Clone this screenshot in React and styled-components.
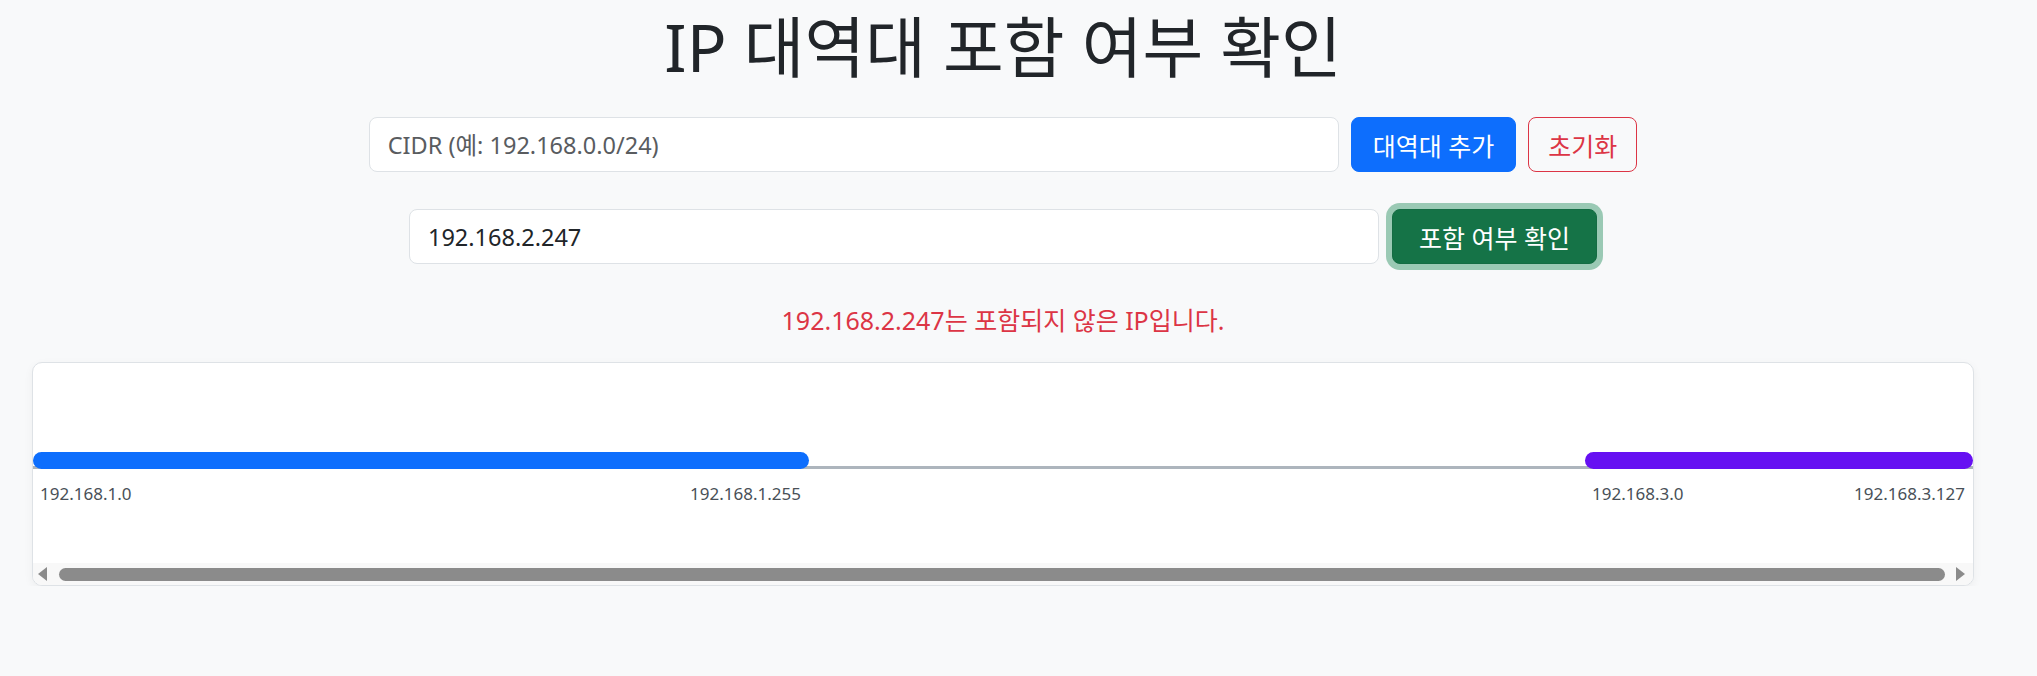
import React from "react";
import styled, { createGlobalStyle } from "styled-components";

const GlobalStyle = createGlobalStyle`
  body {
    margin: 0;
    background: #f8f9fa;
    color: #212529;
    font-family: "Noto Sans", "Noto Sans CJK KR", sans-serif;
  }
`;

const Page = styled.div`
  width: 1942px;
  margin-left: 32px;
`;

const Title = styled.h1`
  margin: 7px 0 31px;
  font-size: 66px;
  font-weight: 400;
  line-height: 1.2;
  text-align: center;
  color: #212529;
`;

const Row = styled.div`
  display: flex;
  justify-content: center;
  gap: ${(props) => props.gap || 12}px;
  margin-bottom: ${(props) => props.bottom || 0}px;
`;

const Input = styled.input`
  box-sizing: border-box;
  width: 970px;
  height: 55px;
  padding: 0 18px;
  border: 1px solid #dee2e6;
  border-radius: 8px;
  background: #fff;
  color: #212529;
  font-family: inherit;
  font-size: 23.5px;
  outline: none;
  &::placeholder {
    color: #595c5f;
  }
`;

const Button = styled.button`
  box-sizing: border-box;
  height: 55px;
  padding: 0 ${(props) => props.pad || 21}px;
  border-radius: 8px;
  font-family: inherit;
  font-size: 25px;
  cursor: pointer;
  border: 1px solid
    ${(props) =>
      props.variant === "danger"
        ? "#dc3545"
        : props.variant === "success"
        ? "#146c43"
        : "#0d6efd"};
  background: ${(props) =>
    props.variant === "danger"
      ? "transparent"
      : props.variant === "success"
      ? "#157347"
      : "#0d6efd"};
  color: ${(props) => (props.variant === "danger" ? "#dc3545" : "#fff")};
  box-shadow: ${(props) =>
    props.focused ? "0 0 0 6px rgba(60, 153, 110, 0.5)" : "none"};
`;

const Message = styled.p`
  margin: 38px 0 24px;
  font-size: 25px;
  line-height: 36px;
  text-align: center;
  color: #dc3545;
`;

const Card = styled.div`
  height: 224px;
  box-sizing: border-box;
  border: 1px solid #dee2e6;
  border-radius: 10px;
  background: #fff;
  overflow: hidden;
  box-shadow: 0 3px 10px rgba(0, 0, 0, 0.05);
  display: flex;
  flex-direction: column;
`;

const Timeline = styled.div`
  flex: 1;
  padding-top: 89px;
`;

const Track = styled.div`
  position: relative;
  height: 17px;
  &::after {
    content: "";
    position: absolute;
    left: 0;
    right: 0;
    bottom: 0;
    height: 3px;
    background: #adb5bd;
  }
`;

const Bar = styled.div`
  position: absolute;
  top: 0;
  bottom: 0;
  border-radius: 9px;
  background: ${(props) => props.color};
  z-index: 1;
`;

const Labels = styled.div`
  position: relative;
  height: 22px;
  margin-top: 14px;
`;

const Label = styled.span`
  position: absolute;
  top: 0;
  font-family: "Noto Sans", sans-serif;
  font-size: 17px;
  line-height: 22px;
  color: #495057;
  white-space: nowrap;
`;

const ScrollBar = styled.div`
  height: 22px;
  display: flex;
  align-items: center;
  padding: 0 8px 0 5px;
  background: #f8f8f8;
`;

const Arrow = styled.span`
  width: 0;
  height: 0;
  border-top: 7px solid transparent;
  border-bottom: 7px solid transparent;
  border-${(props) => (props.dir === "left" ? "right" : "left")}: 9px solid #8b8b8b;
`;

const Thumb = styled.div`
  flex: 1;
  height: 13px;
  margin: 0 11px 0 12px;
  border-radius: 7px;
  background: #8b8b8b;
`;

const toNum = (ip) =>
  ip.split(".").reduce((acc, part) => acc * 256 + Number(part), 0);

const ranges = [
  { start: "192.168.1.0", end: "192.168.1.255", color: "#0d6efd" },
  { start: "192.168.3.0", end: "192.168.3.127", color: "#6610f2" },
];

export default function App() {
  const min = toNum(ranges[0].start);
  const max = toNum(ranges[ranges.length - 1].end) + 1;
  const pct = (n) => ((n - min) / (max - min)) * 100;

  return (
    <>
      <GlobalStyle />
      <Page>
        <Title>IP 대역대 포함 여부 확인</Title>
        <Row bottom={37}>
          <Input placeholder="CIDR (예: 192.168.0.0/24)" />
          <Button>대역대 추가</Button>
          <Button variant="danger" pad={19}>
            초기화
          </Button>
        </Row>
        <Row gap={13}>
          <Input defaultValue="192.168.2.247" />
          <Button variant="success" pad={26} focused>
            포함 여부 확인
          </Button>
        </Row>
        <Message>192.168.2.247는 포함되지 않은 IP입니다.</Message>
        <Card>
          <Timeline>
            <Track>
              {ranges.map((r) => {
                const left = pct(toNum(r.start));
                const right = pct(toNum(r.end) + 1);
                return (
                  <Bar
                    key={r.start}
                    color={r.color}
                    style={{ left: `${left}%`, width: `${right - left}%` }}
                  />
                );
              })}
            </Track>
            <Labels>
              {ranges.map((r) => (
                <React.Fragment key={r.start}>
                  <Label style={{ left: `calc(${pct(toNum(r.start))}% + 7px)` }}>
                    {r.start}
                  </Label>
                  <Label
                    style={{
                      right: `calc(${100 - pct(toNum(r.end) + 1)}% + 8px)`,
                    }}
                  >
                    {r.end}
                  </Label>
                </React.Fragment>
              ))}
            </Labels>
          </Timeline>
          <ScrollBar>
            <Arrow dir="left" />
            <Thumb />
            <Arrow dir="right" />
          </ScrollBar>
        </Card>
      </Page>
    </>
  );
}
